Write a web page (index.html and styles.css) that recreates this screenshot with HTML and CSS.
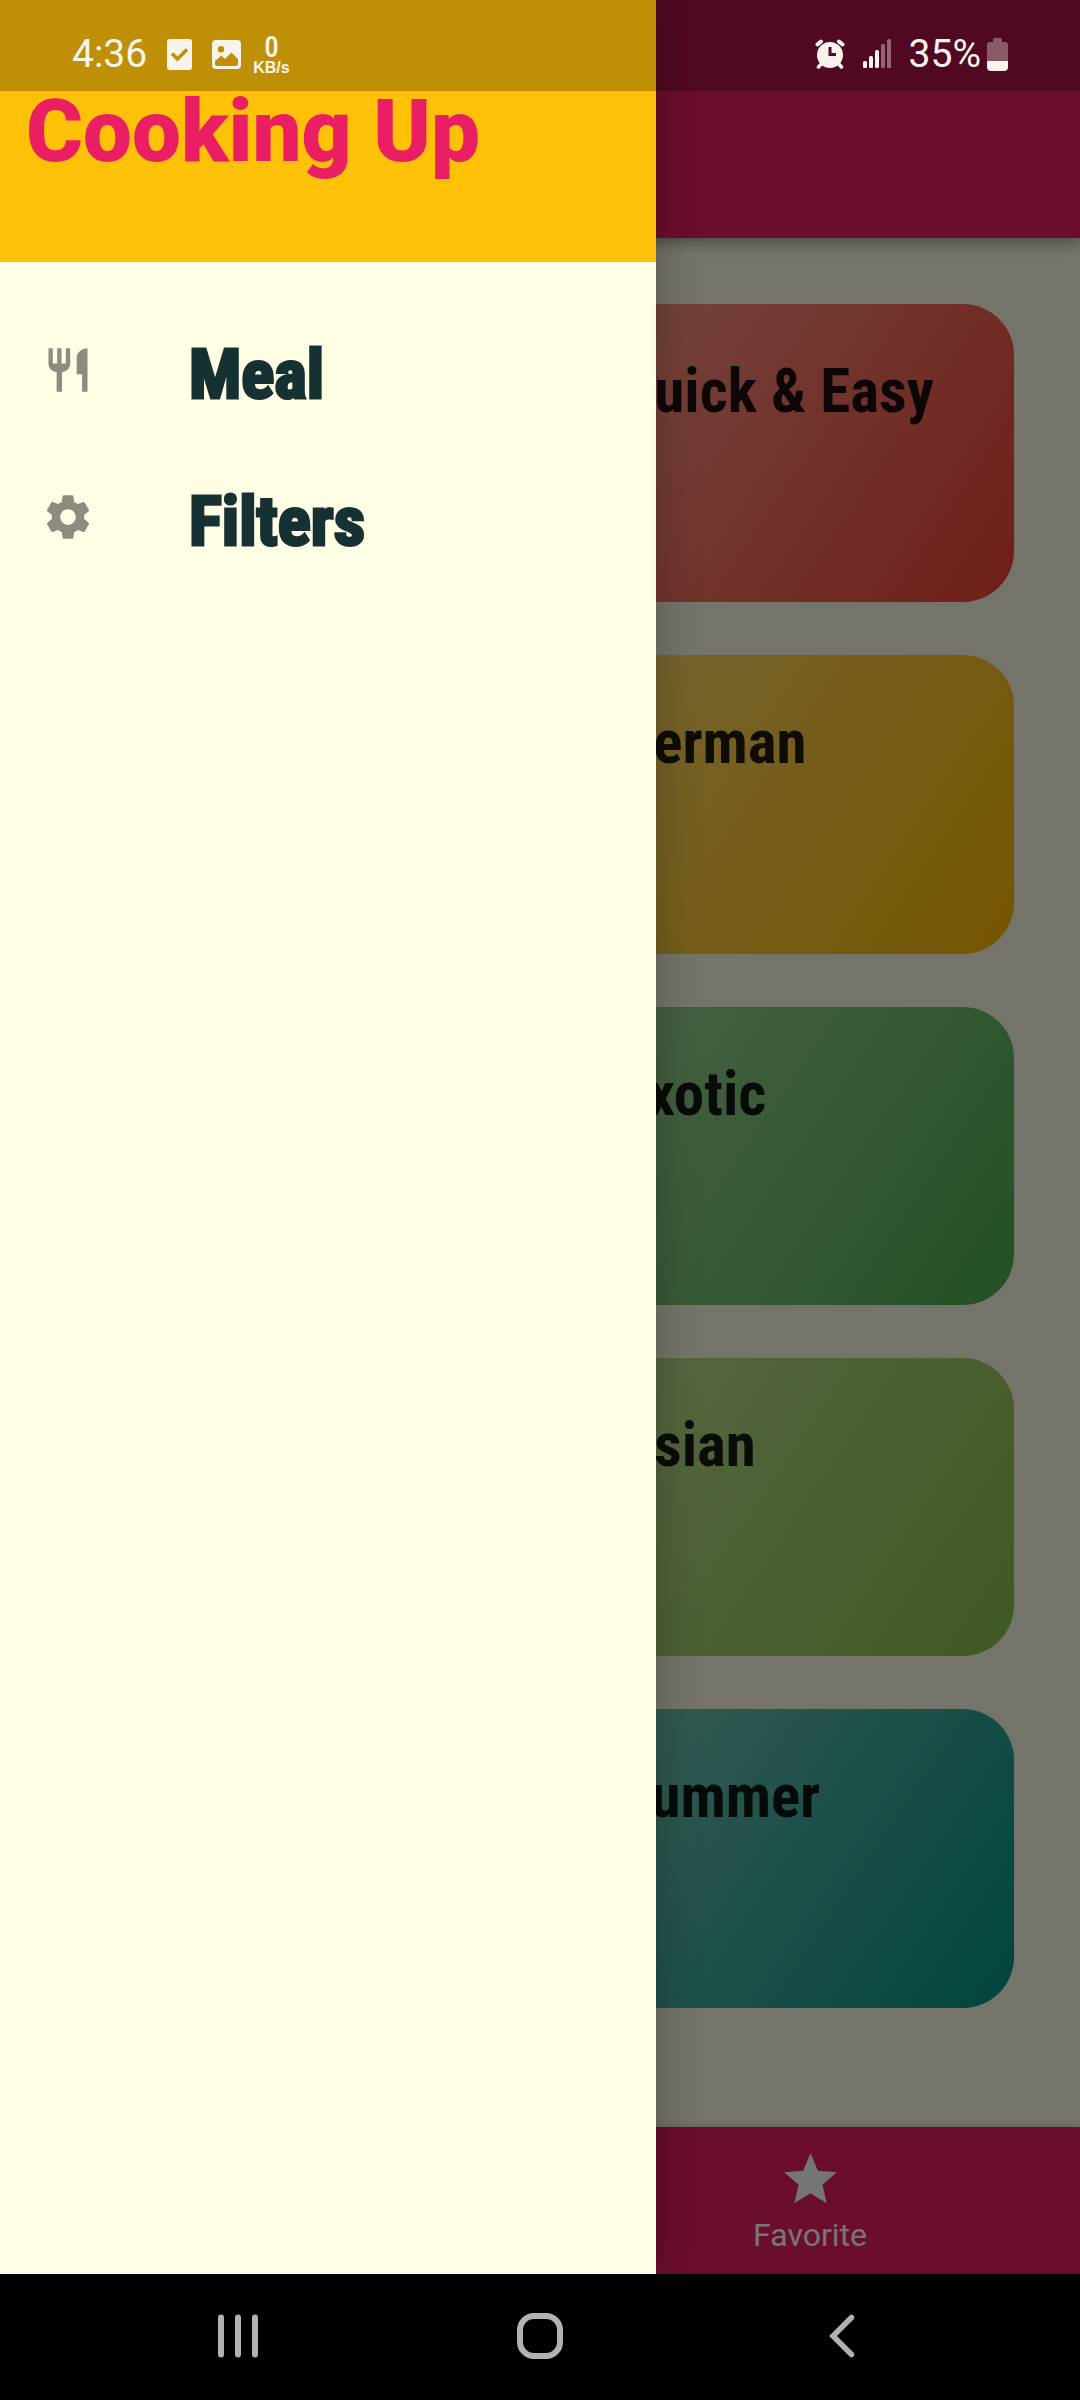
FILE: index.html
```html
<!DOCTYPE html>
<html lang="en">
<head>
  <meta charset="utf-8">
  <meta name="viewport" content="width=device-width, initial-scale=1">
  <title>Cooking Up</title>
  <link rel="stylesheet" href="styles.css">
</head>
<body>
  <div class="app">
    <header class="app-bar"></header>

    <main class="categories">
      <a class="card card-red" href="#quick">Quick &amp; Easy</a>
      <a class="card card-amber" href="#german">German</a>
      <a class="card card-green" href="#exotic">Exotic</a>
      <a class="card card-lime" href="#asian">Asian</a>
      <a class="card card-teal" href="#summer">Summer</a>
    </main>

    <nav class="tabs">
      <a class="tab" href="#favorite">
        <svg class="tab-icon" viewBox="0 0 24 24" aria-hidden="true"><path d="M12 17.27L18.18 21l-1.64-7.03L22 9.24l-7.19-.61L12 2 9.19 8.63 2 9.24l5.46 4.73L5.82 21z"/></svg>
        Favorite
      </a>
    </nav>

    <div class="scrim"></div>

    <aside class="drawer">
      <h1 class="drawer-title">Cooking Up</h1>
      <nav class="drawer-list">
        <a class="drawer-item" href="#meal">
          <svg class="drawer-icon" viewBox="0 0 24 24" aria-hidden="true"><path d="M11 9H9V2H7v7H5V2H3v7c0 2.12 1.66 3.84 3.75 3.97V22h2.5v-9.03C11.34 12.84 13 11.12 13 9V2h-2v7zm5-3v8h2.5v8H21V2c-2.76 0-5 2.24-5 4z"/></svg>
          <span class="drawer-label">Meal</span>
        </a>
        <a class="drawer-item" href="#filters">
          <svg class="drawer-icon" viewBox="0 0 24 24" aria-hidden="true"><path d="M19.43 12.98c.04-.32.07-.64.07-.98s-.03-.66-.07-.98l2.11-1.65c.19-.15.24-.42.12-.64l-2-3.46c-.12-.22-.39-.3-.61-.22l-2.49 1c-.52-.4-1.08-.73-1.69-.98l-.38-2.65C14.46 2.18 14.25 2 14 2h-4c-.25 0-.46.18-.49.42l-.38 2.65c-.61.25-1.17.59-1.69.98l-2.49-1c-.23-.09-.49 0-.61.22l-2 3.46c-.13.22-.07.49.12.64l2.11 1.65c-.04.32-.07.65-.07.98s.03.66.07.98l-2.11 1.65c-.19.15-.24.42-.12.64l2 3.46c.12.22.39.3.61.22l2.49-1c.52.4 1.08.73 1.69.98l.38 2.65c.03.24.24.42.49.42h4c.25 0 .46-.18.49-.42l.38-2.65c.61-.25 1.17-.59 1.69-.98l2.49 1c.23.09.49 0 .61-.22l2-3.46c.12-.22.07-.49-.12-.64l-2.11-1.65zM12 15.6c-1.98 0-3.6-1.62-3.6-3.6s1.62-3.6 3.6-3.6 3.6 1.62 3.6 3.6-1.62 3.6-3.6 3.6z"/></svg>
          <span class="drawer-label">Filters</span>
        </a>
      </nav>
    </aside>

    <div class="status-bar">
      <div class="status-left">
        <span class="status-text">4:36</span>
        <svg width="25" height="31" viewBox="0 0 25 31" aria-hidden="true"><rect width="25" height="31" rx="3" fill="currentColor"/><path d="M5 14.5l5.5 5.5L20 10.5" fill="none" stroke="#bf9105" stroke-width="3.6"/></svg>
        <svg width="29" height="29" viewBox="0 0 29 29" aria-hidden="true"><path fill="currentColor" fill-rule="evenodd" d="M4 0h21a4 4 0 0 1 4 4v21a4 4 0 0 1-4 4H4a4 4 0 0 1-4-4V4a4 4 0 0 1 4-4zM3 21v3q0 2 2 2h19q2 0 2-2v-5l-6.5-6.5L13 19l-3.500-3.500zM9 6a3.200 3.200 0 1 0 0 6.400a3.200 3.200 0 1 0 0-6.400z"/></svg>
        <span class="speed"><span class="speed-value">0</span><span class="speed-unit">KB/s</span></span>
      </div>
      <div class="status-right">
        <svg width="30" height="30" viewBox="0 0 30 30" aria-hidden="true"><g stroke="currentColor" stroke-linecap="round"><path d="M2.500 5.500L6 2.500M27.500 5.500L24 2.500" stroke-width="4"/><path d="M7 24l-3.500 4M23 24l3.500 4" stroke-width="3.500"/></g><circle cx="15" cy="16" r="13" fill="currentColor"/><path d="M15 8v7.500h6" fill="none" stroke="#500a22" stroke-width="3"/></svg>
        <svg width="28" height="30" viewBox="0 0 28 30" aria-hidden="true"><g fill="currentColor"><rect y="22" width="4" height="7" rx="1.500"/><rect x="6" y="17" width="4" height="12" rx="1.500"/><rect x="12" y="11" width="4" height="18" rx="1.500"/><rect x="18" y="5" width="4" height="24" rx="1.500" opacity=".4"/><rect x="24" width="4" height="29" rx="1.500" opacity=".4"/></g></svg>
        <span class="battery">
          <span class="status-text">35%</span>
          <svg width="21" height="33" viewBox="0 0 21 33" aria-hidden="true"><g fill="currentColor"><path opacity=".35" d="M6 2q0-2 2-2h5q2 0 2 2v2h3q3 0 3 3v16H0V7q0-3 3-3h3z"/><path d="M0 23h21v6q0 4-4 4H4q-4 0-4-4z"/></g></svg>
        </span>
      </div>
    </div>
  </div>

  <nav class="system-nav">
    <button class="system-button" type="button" aria-label="Recent apps">
      <svg width="48" height="48" viewBox="0 0 48 48" aria-hidden="true"><path d="M7 5.500v37M24 5.500v37M41 5.500v37" stroke="currentColor" stroke-width="6" stroke-linecap="round"/></svg>
    </button>
    <button class="system-button" type="button" aria-label="Home">
      <svg width="48" height="48" viewBox="0 0 48 48" aria-hidden="true"><rect x="4" y="4" width="40" height="40" rx="14" fill="none" stroke="currentColor" stroke-width="6"/></svg>
    </button>
    <button class="system-button" type="button" aria-label="Back">
      <svg width="48" height="48" viewBox="0 0 48 48" aria-hidden="true"><path d="M33.500 5.500L15 24l18.500 18.500" fill="none" stroke="currentColor" stroke-width="5.500" stroke-linecap="round"/></svg>
    </button>
  </nav>
</body>
</html>
```
FILE: styles.css
```css
* {
  box-sizing: border-box;
}

body {
  margin: 0;
  min-height: 100vh;
  display: flex;
  flex-direction: column;
  background: #000;
  font-family: Roboto, sans-serif;
}

a {
  color: inherit;
  text-decoration: none;
}

svg {
  flex: none;
}

.app {
  position: relative;
  flex: 1;
  display: flex;
  flex-direction: column;
  background: #fffde7;
}

.app-bar {
  height: 238px;
  background: #e91e63;
  box-shadow: 0 4px 14px rgba(0, 0, 0, 0.4);
}

.categories {
  flex: 1;
  display: grid;
  grid-template-columns: 1fr 1fr;
  align-content: start;
  gap: 53px;
  padding: 66px;
}

.card {
  grid-column: 2;
  aspect-ratio: 3 / 2;
  padding: 51px;
  border-radius: 51px;
  color: rgba(0, 0, 0, 0.87);
  font-family: "Roboto Condensed", Roboto, sans-serif;
  font-size: 61px;
  font-weight: 700;
  line-height: 72px;
  white-space: nowrap;
}

.card-red {
  background: linear-gradient(124deg, #f4433680, #f44336);
}

.card-amber {
  background: linear-gradient(124deg, #ffbc0080, #ffbc00);
}

.card-green {
  background: linear-gradient(124deg, #4caf5080, #4caf50);
}

.card-lime {
  background: linear-gradient(124deg, #8bc34a80, #8bc34a);
}

.card-teal {
  background: linear-gradient(124deg, #00968880, #009688);
}

.tabs {
  display: grid;
  grid-template-columns: 1fr 1fr;
  height: 147px;
  background: #e91e63;
  box-shadow: 0 0 8px rgba(0, 0, 0, 0.2);
}

.tab {
  grid-column: 2;
  display: flex;
  flex-direction: column;
  align-items: center;
  gap: 6px;
  padding-top: 21px;
  color: #fff;
  font-size: 32px;
  line-height: 36px;
}

.tab-icon {
  width: 63px;
  height: 63px;
  fill: currentColor;
}

.scrim {
  position: absolute;
  inset: 0;
  background: rgba(0, 0, 0, 0.54);
}

.drawer {
  position: absolute;
  inset: 0 auto 0 0;
  width: 656px;
  max-width: 80%;
  background: #fffde4;
  box-shadow: 0 0 40px rgba(0, 0, 0, 0.25);
  clip-path: inset(0 -60px 0 0);
}

.drawer-title {
  margin: 0;
  height: 262px;
  padding: 80px 26px 0;
  background: #ffc107;
  color: #e91e63;
  font-size: 87px;
  font-weight: 900;
  line-height: 102px;
}

.drawer-list {
  padding-top: 34px;
}

.drawer-item {
  display: flex;
  align-items: center;
  gap: 95px;
  height: 147px;
  padding: 0 42px;
  color: #163132;
  font-family: "Roboto Condensed", Roboto, sans-serif;
  font-size: 69px;
  font-weight: 700;
  line-height: 84px;
  -webkit-text-stroke: 3px currentColor;
}

.drawer-label {
  padding-top: 10px;
}

.drawer-icon {
  width: 52px;
  height: 52px;
  fill: #8e8c7f;
}

.status-bar {
  position: absolute;
  inset: 0 0 auto 0;
  display: flex;
  justify-content: space-between;
  height: 91px;
  padding: 17px 72px 0;
  background: rgba(0, 0, 0, 0.25);
  color: #f8f4ec;
}

.status-left,
.status-right,
.battery {
  display: flex;
  align-items: center;
}

.status-left {
  gap: 20px;
}

.status-right {
  gap: 18px;
}

.battery {
  gap: 6px;
}

.status-text {
  font-size: 39px;
  line-height: 48px;
}

.speed {
  display: flex;
  flex-direction: column;
  align-items: center;
  margin-left: -8px;
  font-weight: 700;
}

.speed-value {
  font-family: "Roboto Condensed", Roboto, sans-serif;
  font-size: 29px;
  font-weight: 500;
  line-height: 27px;
}

.speed-unit {
  font-family: "Liberation Sans", sans-serif;
  font-size: 16px;
  line-height: 14px;
}

.system-nav {
  display: flex;
  height: 126px;
  padding: 0 8% 2px;
  background: #000;
}

.system-button {
  flex: 1;
  display: flex;
  align-items: center;
  justify-content: center;
  padding: 0;
  border: 0;
  background: none;
  color: #b2b2b2;
}
```
